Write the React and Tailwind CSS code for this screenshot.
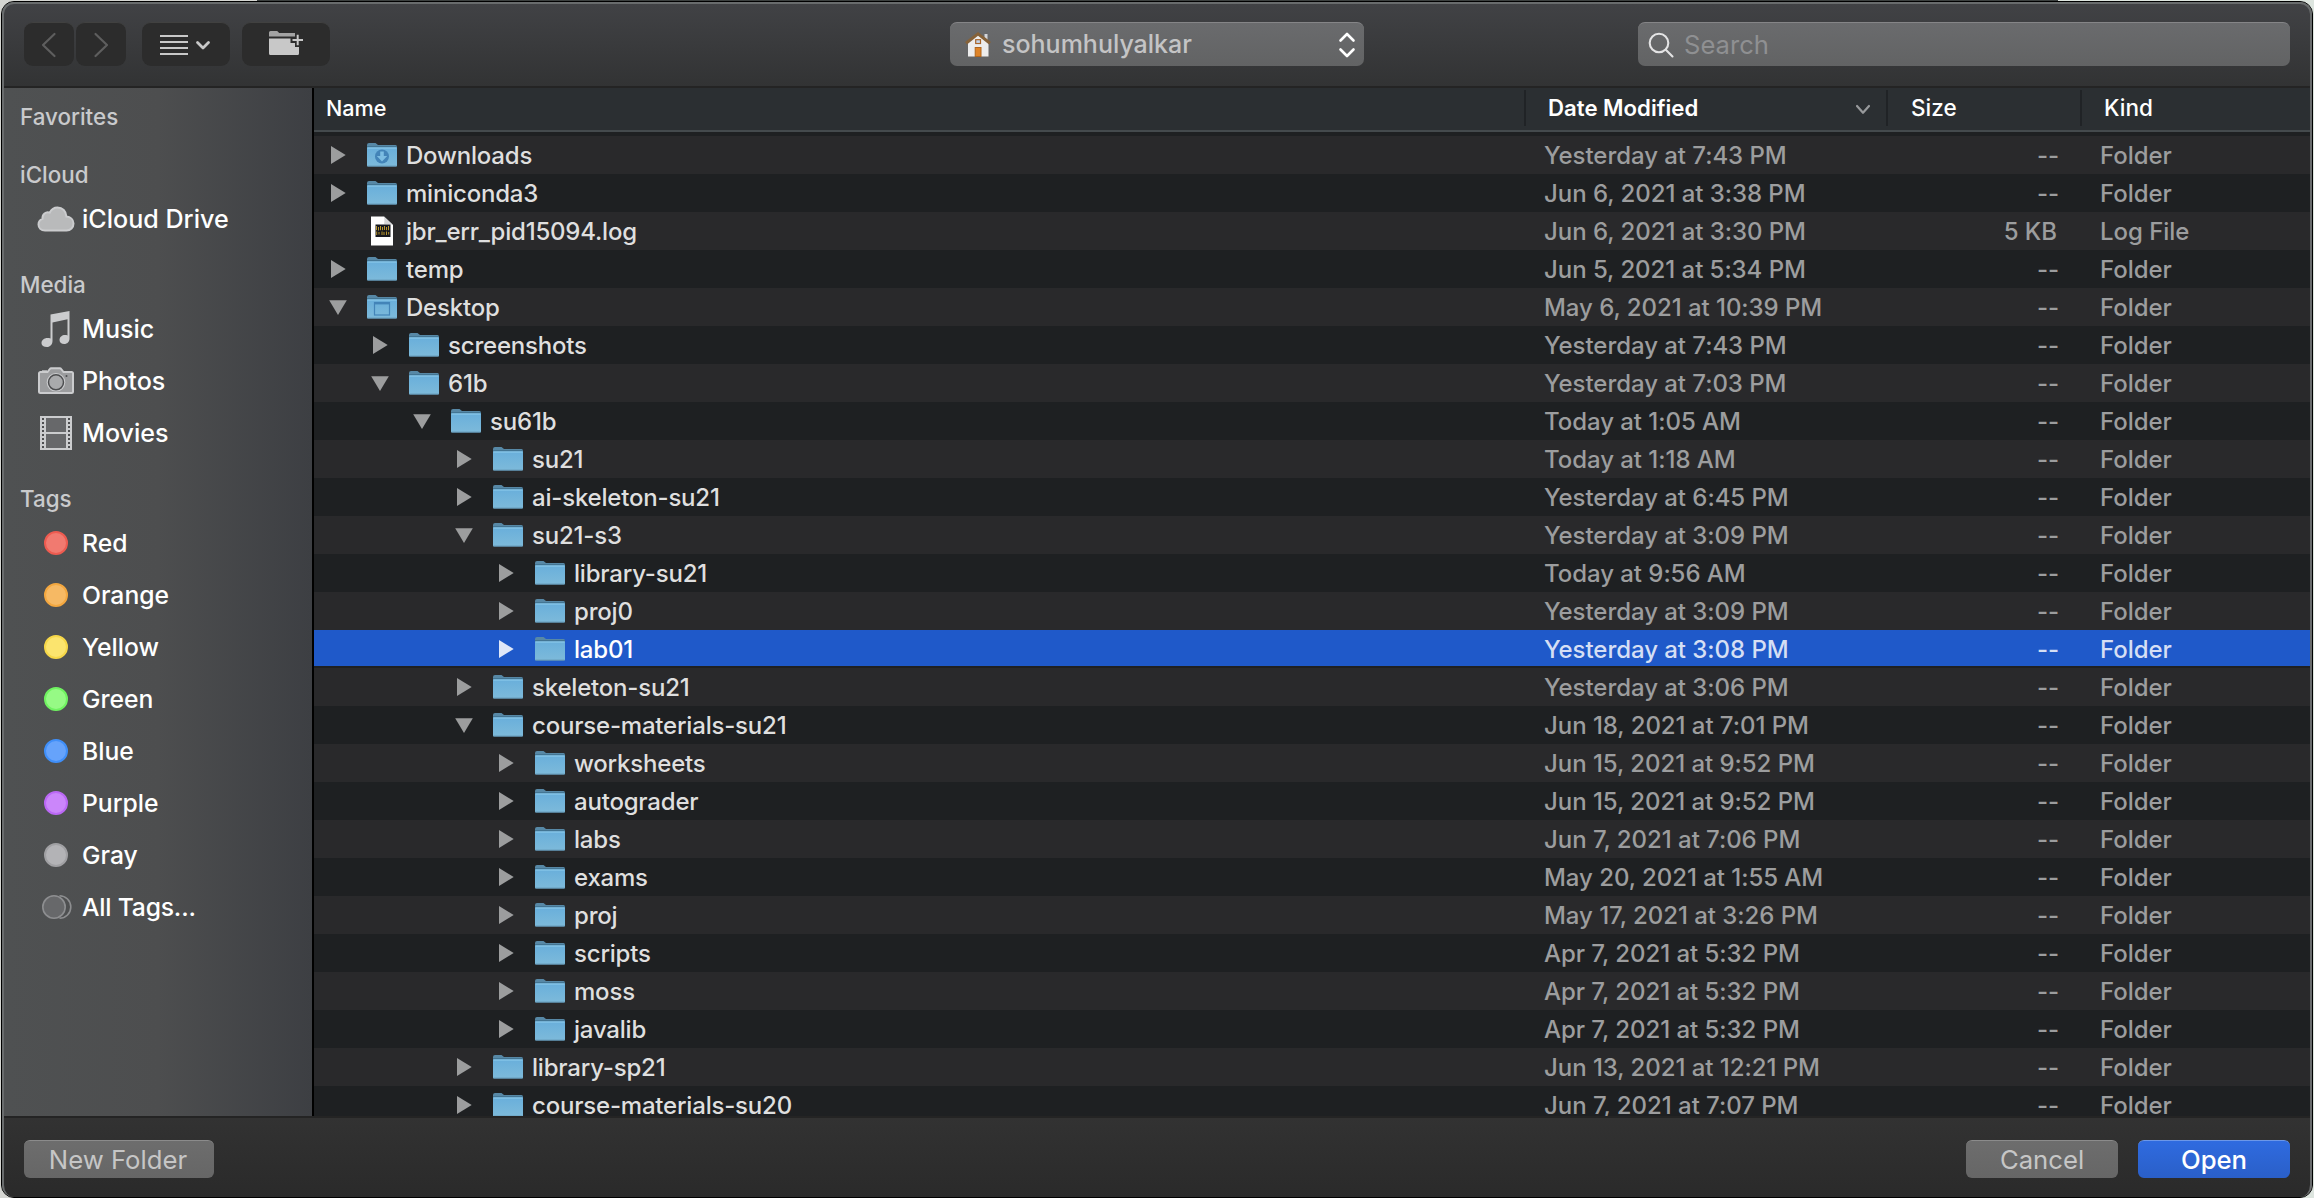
import React from "react";

const FILES = [
  { name: "Downloads", depth: 0, state: "closed", icon: "downloads", date: "Yesterday at 7:43 PM" },
  { name: "miniconda3", depth: 0, state: "closed", date: "Jun 6, 2021 at 3:38 PM" },
  { name: "jbr_err_pid15094.log", depth: 0, state: "none", icon: "log", date: "Jun 6, 2021 at 3:30 PM", size: "5 KB", kind: "Log File" },
  { name: "temp", depth: 0, state: "closed", date: "Jun 5, 2021 at 5:34 PM" },
  { name: "Desktop", depth: 0, state: "open", icon: "desktop", date: "May 6, 2021 at 10:39 PM" },
  { name: "screenshots", depth: 1, state: "closed", date: "Yesterday at 7:43 PM" },
  { name: "61b", depth: 1, state: "open", date: "Yesterday at 7:03 PM" },
  { name: "su61b", depth: 2, state: "open", date: "Today at 1:05 AM" },
  { name: "su21", depth: 3, state: "closed", date: "Today at 1:18 AM" },
  { name: "ai-skeleton-su21", depth: 3, state: "closed", date: "Yesterday at 6:45 PM" },
  { name: "su21-s3", depth: 3, state: "open", date: "Yesterday at 3:09 PM" },
  { name: "library-su21", depth: 4, state: "closed", date: "Today at 9:56 AM" },
  { name: "proj0", depth: 4, state: "closed", date: "Yesterday at 3:09 PM" },
  { name: "lab01", depth: 4, state: "closed", date: "Yesterday at 3:08 PM", selected: true },
  { name: "skeleton-su21", depth: 3, state: "closed", date: "Yesterday at 3:06 PM" },
  { name: "course-materials-su21", depth: 3, state: "open", date: "Jun 18, 2021 at 7:01 PM" },
  { name: "worksheets", depth: 4, state: "closed", date: "Jun 15, 2021 at 9:52 PM" },
  { name: "autograder", depth: 4, state: "closed", date: "Jun 15, 2021 at 9:52 PM" },
  { name: "labs", depth: 4, state: "closed", date: "Jun 7, 2021 at 7:06 PM" },
  { name: "exams", depth: 4, state: "closed", date: "May 20, 2021 at 1:55 AM" },
  { name: "proj", depth: 4, state: "closed", date: "May 17, 2021 at 3:26 PM" },
  { name: "scripts", depth: 4, state: "closed", date: "Apr 7, 2021 at 5:32 PM" },
  { name: "moss", depth: 4, state: "closed", date: "Apr 7, 2021 at 5:32 PM" },
  { name: "javalib", depth: 4, state: "closed", date: "Apr 7, 2021 at 5:32 PM" },
  { name: "library-sp21", depth: 3, state: "closed", date: "Jun 13, 2021 at 12:21 PM" },
  { name: "course-materials-su20", depth: 3, state: "closed", date: "Jun 7, 2021 at 7:07 PM" },
];

const INDENT = ["pl-[15px]", "pl-[57px]", "pl-[99px]", "pl-[141px]", "pl-[183px]"];

const TAGS = [
  ["Red", "bg-[#f17a70] border-[#ee5b50]"],
  ["Orange", "bg-[#f6b964] border-[#f3a73f]"],
  ["Yellow", "bg-[#fbe46e] border-[#f6d748]"],
  ["Green", "bg-[#96fa85] border-[#6ff260]"],
  ["Blue", "bg-[#66a3fb] border-[#3f8ff9]"],
  ["Purple", "bg-[#cb86fa] border-[#bb68f5]"],
  ["Gray", "bg-[#b3b3b6] border-[#a0a0a3]"],
];

function FolderIcon({ type }) {
  return (
    <svg width="30" height="26" viewBox="0 0 30 26" className="mt-1.5 shrink-0">
      <defs>
        <linearGradient id="folderFront" x1="0" y1="0" x2="0" y2="1">
          <stop offset="0" stopColor="#69afdb" />
          <stop offset="1" stopColor="#7dbada" />
        </linearGradient>
      </defs>
      <path d="M0 3a2 2 0 0 1 2-2h6.500l2.500 2h17.500a1.500 1.500 0 0 1 1.500 1.500V8H0z" fill="#5788a6" />
      <path d="M0 5.500h30V23.500a1 1 0 0 1-1 1H1a1 1 0 0 1-1-1z" fill="url(#folderFront)" />
      <path d="M0 4.600h30" stroke="#3f7090" strokeWidth="0.900" />
      <path d="M0.500 6h29" stroke="#8fcdee" strokeWidth="1" />
      <path d="M0.500 24.200h29" stroke="#5a8aa6" strokeWidth="0.900" />
      {type === "downloads" && (
        <g>
          <circle cx="15" cy="14.500" r="7" fill="#4384b8" />
          <path d="M13.200 9.500h3.600v4.500h3.400L15 19.500 9.800 14h3.400z" fill="#7cbde2" />
        </g>
      )}
      {type === "desktop" && (
        <g fill="none" stroke="#4384b8">
          <rect x="7.500" y="8.500" width="15" height="12.500" strokeWidth="1.200" />
          <path d="M7 9.300h16" strokeWidth="2.200" />
        </g>
      )}
    </svg>
  );
}

function LogIcon() {
  return (
    <svg width="30" height="30" viewBox="0 0 30 30" className="mt-[3.5px] shrink-0">
      <path d="M4 0.500h13L26 9v20.500H4z" fill="#fff" />
      <path d="M17 0.500c0.500 3 0.500 5.500 0 8 3-0.800 6-0.700 9 0.500z" fill="#d6d7d8" />
      <rect x="8.500" y="8.500" width="15" height="12.500" fill="#16181f" />
      <path d="M9.500 10v4.200M11.500 11v3.500M13.500 10v4.200M15.500 11v3.200M17.500 10v4M19.500 11v3.200M21.500 10v4.200M9.700 15.500v3.500M12 16v2.500M15 15.500v3.500M17 16v3M19.500 15.500v3.500M21.700 16v2.500" stroke="#b8962f" strokeWidth="1" />
    </svg>
  );
}

function Disclosure({ state, selected }) {
  const fill = selected ? "#dfe7f8" : "#9c9d9e";
  return (
    <svg width="18" height="38" viewBox="0 0 18 38" className="mr-5 shrink-0" fill={fill}>
      {state === "closed" && <path d="M2 10.100v18L16.700 19.100z" />}
      {state === "open" && <path d="M0.200 12.300h17.600L9 27z" />}
    </svg>
  );
}

function Row({ file, index }) {
  const stripe = index % 2 === 0 ? "bg-[#29292b]" : "bg-[#1e2022]";
  const nameColor = file.selected ? "text-white" : "text-[#dfdfdf]";
  const metaColor = file.selected ? "text-[#d5dff4]" : "text-[#9c9d9e]";
  const fill = file.selected ? "border-b-2 border-[#1e2022] bg-[#1f59c9]" : stripe;
  return (
    <div className={"flex h-[38px] shrink-0 items-start text-2xl leading-[40px] font-[450] tracking-[-0.05px] whitespace-nowrap " + fill}>
      <div className={"flex w-[1230px] shrink-0 items-start " + INDENT[file.depth]}>
        <Disclosure state={file.state} selected={file.selected} />
        {file.icon === "log" ? <LogIcon /> : <FolderIcon type={file.icon} />}
        <span className={"ml-[9px] tracking-[-0.2px] " + nameColor}>{file.name}</span>
      </div>
      <div className={"w-[314px] shrink-0 " + metaColor}>{file.date}</div>
      <div className={"w-[201px] shrink-0 text-right " + (file.size ? "pr-[2px] " : "") + metaColor}>{file.size || "--"}</div>
      <div className={"ml-[41px] " + metaColor}>{file.kind || "Folder"}</div>
    </div>
  );
}

function SideItem({ icon, tag, children }) {
  return (
    <div className={"flex h-[52px] items-center font-medium text-white " + (tag ? "text-[24.7px]" : "text-[25.1px]")}>
      <span className="mr-[6px] ml-8 flex w-10 justify-center">{icon}</span>
      <span className="pt-0.5">{children}</span>
    </div>
  );
}

function SideHeader({ children }) {
  return <div className="flex h-[38px] items-center pt-0.5 pl-4 text-[22.4px] font-medium text-[#c9cacc]">{children}</div>;
}

const CloudIcon = (
  <svg width="38" height="26" viewBox="0 0 38 26">
    <path d="M8 24.500C4 24.500 1.500 21.800 1.500 18.500c0-2.700 1.500-4.700 4-5.600C5 8.500 9 5 12.700 6.600 14.500 3 17.500 1.500 20.500 1.500c5 0 8.700 3.700 8.900 9 4.100 0.300 7.100 3 7.100 6.900 0 4-3 7.100-6.900 7.100z" fill="#b9babb" stroke="#cbccce" strokeWidth="2" />
  </svg>
);

const MusicIcon = (
  <svg width="30" height="38" viewBox="0 0 30 38">
    <path d="M9.500 4.500L28.500 1v27.500c0 3.300-2.300 5.500-5.300 5.500-2.600 0-4.700-1.500-4.700-4 0-3 2.600-5 5.500-5 1 0 1.800 0.100 2.500 0.400V9.300L11.500 12.500V31c0 3.500-2.500 6-5.500 6C2.600 37 0.500 35.400 0.500 33.200c0-3 2.700-5.200 5.800-5.200 1.200 0 2.400 0.100 3.200 0.400z" fill="#cbccce" />
  </svg>
);

const CameraIcon = (
  <svg width="36" height="28" viewBox="0 0 36 28">
    <path d="M2.500 5H9.500l2.300-3c0.400-0.600 0.800-0.800 1.400-0.800h8.600c0.600 0 1 0.200 1.400 0.800L25.500 5H33.500a1.500 1.500 0 0 1 1.500 1.500V24.500a1.500 1.500 0 0 1-1.500 1.500H2.500A1.500 1.500 0 0 1 1 24.500V6.500A1.500 1.500 0 0 1 2.500 5z" fill="#9b9c9e" stroke="#cbccce" strokeWidth="2" />
    <path d="M4 4.300h5" stroke="#cbccce" strokeWidth="2" />
    <circle cx="18" cy="15.300" r="9.300" fill="#cbccce" />
    <circle cx="18" cy="15.300" r="7.500" fill="#a9aaac" stroke="#4d4e50" strokeWidth="1.500" />
    <circle cx="28.500" cy="9" r="1" fill="#4d4e50" />
  </svg>
);

const FilmIcon = (
  <svg width="32" height="34" viewBox="0 0 32 34">
    <rect width="32" height="34" fill="#cbccce" />
    <rect x="6" y="2" width="20" height="14" fill="#67686a" />
    <rect x="6" y="18" width="20" height="14" fill="#67686a" />
    <path d="M3 2v31M29 2v31" stroke="#4d4e50" strokeWidth="2" strokeDasharray="2 2" />
  </svg>
);

const AllTagsIcon = (
  <svg width="32" height="26" viewBox="0 0 32 26" fill="none" stroke="#8d8e90" strokeWidth="1.600">
    <path d="M19.500 1.700a11.300 11.300 0 0 1 0 22.600" />
    <circle cx="14" cy="13" r="11.200" fill="#67686a" />
  </svg>
);

function ToolButton({ className, children }) {
  return (
    <div className={"flex h-11 items-center justify-center rounded-[9px] border-t border-[#414140] bg-[#2c2c2c] " + className}>
      {children}
    </div>
  );
}

function Toolbar() {
  return (
    <div className="flex h-[84px] shrink-0 items-start border-b-2 border-[#242424] bg-linear-to-b from-[#414245] to-[#323334] pt-[18px] pl-5">
      <ToolButton className="w-[50px]">
        <svg width="16" height="26" viewBox="0 0 16 26" fill="none" stroke="#5e5e5e" strokeWidth="2.200" strokeLinecap="round" strokeLinejoin="round">
          <path d="M13.500 2L2 13l11.500 11" />
        </svg>
      </ToolButton>
      <ToolButton className="ml-0.5 w-[50px]">
        <svg width="16" height="26" viewBox="0 0 16 26" fill="none" stroke="#5e5e5e" strokeWidth="2.200" strokeLinecap="round" strokeLinejoin="round">
          <path d="M2.500 2L14 13 2.500 24" />
        </svg>
      </ToolButton>
      <ToolButton className="ml-4 w-[88px]">
        <svg width="52" height="22" viewBox="0 0 52 22" fill="none" stroke="#c8c8c8" className="mr-0.5">
          <path d="M1 2h28M1 8h28M1 14h28M1 20h28" strokeWidth="2" />
          <path d="M38.500 8.500l5.500 5.500 5.500-5.500" strokeWidth="2.800" strokeLinecap="round" strokeLinejoin="round" />
        </svg>
      </ToolButton>
      <ToolButton className="ml-3 w-[88px]">
        <svg width="36" height="26" viewBox="0 0 36 26" className="mb-1">
          <path d="M1 6.500V2.500A1.500 1.500 0 0 1 2.500 1h6.700l2 2H27v3.500z" fill="#a3a3a3" />
          <path d="M1 8.500h21.500v4.500h4.500v4h4V23.500a1.500 1.500 0 0 1-1.500 1.500H2.500A1.500 1.500 0 0 1 1 23.500z" fill="#c8c8c8" />
          <path d="M24.500 10h10.500M29.700 4.700v10.500" stroke="#c8c8c8" strokeWidth="2" />
        </svg>
      </ToolButton>
      <div className="ml-[620px] flex h-11 w-[414px] items-center rounded-[7px] border-t border-[#858587] bg-linear-to-b from-[#6a6b6d] to-[#626364] text-[25px] font-[450] text-[#c4c4c5]">
        <svg width="28" height="28" viewBox="0 0 28 28" className="ml-[14px]">
          <path d="M20.500 3h3v8h-3z" fill="#d4d6da" />
          <path d="M4 11.500L14 3.500l10.500 8V25.500H4z" fill="#ededed" />
          <path d="M2 12.300L14 2.800l12 9.500" fill="none" stroke="#85623a" strokeWidth="3" />
          <rect x="11.700" y="8.700" width="4.800" height="3.800" fill="#c3d6ee" stroke="#a8652a" strokeWidth="1.200" />
          <rect x="11.200" y="16.500" width="5.800" height="9" fill="#df8428" stroke="#b0661f" strokeWidth="1" />
        </svg>
        <span className="ml-[10px] pt-px">sohumhulyalkar</span>
        <svg width="18" height="26" viewBox="0 0 18 26" className="mr-[8px] ml-auto" fill="none" stroke="#fff" strokeWidth="2.600" strokeLinecap="round" strokeLinejoin="round">
          <path d="M2.500 8.500L9 2l6.500 6.500M2.500 17.500L9 24l6.500-6.500" />
        </svg>
      </div>
      <div className="ml-[274px] flex h-11 w-[652px] items-center rounded-[7px] border-t border-[#858587] bg-linear-to-b from-[#6a6b6d] to-[#626364] text-[25.6px] text-[#8f9092]">
        <svg width="26" height="26" viewBox="0 0 26 26" className="mr-[10px] ml-[10px]" fill="none" stroke="#e3e3e4" strokeWidth="2.100" strokeLinecap="round">
          <circle cx="11" cy="11" r="9.300" />
          <path d="M17.800 17.800L24.500 24.500" />
        </svg>
        <span className="pt-px">Search</span>
      </div>
    </div>
  );
}

function Sidebar() {
  return (
    <div className="w-[310px] shrink-0 border-r-2 border-black bg-linear-to-r from-[#4f5152] via-[#4d4e4f] to-[#3d3f43] pt-[9px]">
      <div className="flex flex-col gap-5">
        <SideHeader>Favorites</SideHeader>
        <div>
          <SideHeader>iCloud</SideHeader>
          <SideItem icon={CloudIcon}>iCloud Drive</SideItem>
        </div>
        <div>
          <SideHeader>Media</SideHeader>
          <SideItem icon={MusicIcon}>Music</SideItem>
          <SideItem icon={CameraIcon}>Photos</SideItem>
          <SideItem icon={FilmIcon}>Movies</SideItem>
        </div>
        <div>
          <SideHeader>Tags</SideHeader>
          {TAGS.map(([label, color]) => (
            <SideItem key={label} tag icon={<span className={"size-6 rounded-full border-2 " + color} />}>{label}</SideItem>
          ))}
          <SideItem tag icon={AllTagsIcon}>
            <span className="tracking-[-0.2px]">All Tags...</span>
          </SideItem>
        </div>
      </div>
    </div>
  );
}

function ColumnHeader() {
  return (
    <div className="h-12 shrink-0 border-b-4 border-[#1e2022] bg-[#2b2f32]">
      <div className="flex h-11 items-start border-b-2 border-[#444a4d] pt-0.5 text-[22.5px] leading-[36px] font-medium text-white">
        <div className="h-9 w-[1212px] border-r-2 border-[#202326] pl-3 text-[21.6px] font-[550]">Name</div>
        <div className="flex h-9 w-[362px] items-center border-r-2 border-[#202326] pl-[22px] text-[22.2px] font-semibold">
          Date Modified
          <svg width="16" height="11" viewBox="0 0 16 11" className="mt-[3px] mr-[15px] ml-auto" fill="none" stroke="#97999b" strokeWidth="2.200" strokeLinecap="round" strokeLinejoin="round">
            <path d="M2 2l6 6.800L14 2" />
          </svg>
        </div>
        <div className="h-9 w-[194px] border-r-2 border-[#202326] pl-[23px]">Size</div>
        <div className="pl-[22px]">Kind</div>
      </div>
    </div>
  );
}

function Footer() {
  return (
    <div className="flex h-[81px] shrink-0 items-start border-t-2 border-[#242424] bg-linear-to-b from-[#323232] to-[#2a2a2a] pt-[22px] pr-5 pl-5 text-[25.7px] leading-[37px]">
      <div className="h-[38px] w-[190px] rounded-[6px] border-t border-[#8b8b8b] bg-linear-to-b from-[#6d6d6d] to-[#666] pr-0.5 text-center text-[#c6c6c6]">New Folder</div>
      <div className="ml-auto h-[38px] w-[152px] rounded-[6px] border-t border-[#8b8b8b] bg-linear-to-b from-[#6d6d6d] to-[#666] text-center text-[#c6c6c6]">Cancel</div>
      <div className="ml-5 h-[38px] w-[152px] rounded-[6px] border-t border-[#6c97e8] bg-linear-to-b from-[#2f6be0] to-[#2a5fc8] text-center text-[25.7px] font-medium text-white">Open</div>
    </div>
  );
}

export default function App() {
  return (
    <div className="flex h-[1198px] w-[2314px] overflow-hidden bg-[linear-gradient(to_right,#d5d6d2_257px,#3c403f_257px,#3c403f_2058px,#dde5df_2058px)] px-px pt-px font-['Inter',sans-serif]">
      <div className="w-full rounded-[13px] border border-black bg-[#68696a]">
        <div className="flex h-[1195px] flex-col overflow-hidden rounded-[12px] border-x-2 border-t-2 border-[#696c6d]">
          <Toolbar />
          <div className="flex min-h-0 flex-1">
            <Sidebar />
            <div className="flex min-w-0 flex-1 flex-col overflow-hidden">
              <ColumnHeader />
              {FILES.map((file, index) => (
                <Row key={file.name} file={file} index={index} />
              ))}
            </div>
          </div>
          <Footer />
        </div>
      </div>
    </div>
  );
}
